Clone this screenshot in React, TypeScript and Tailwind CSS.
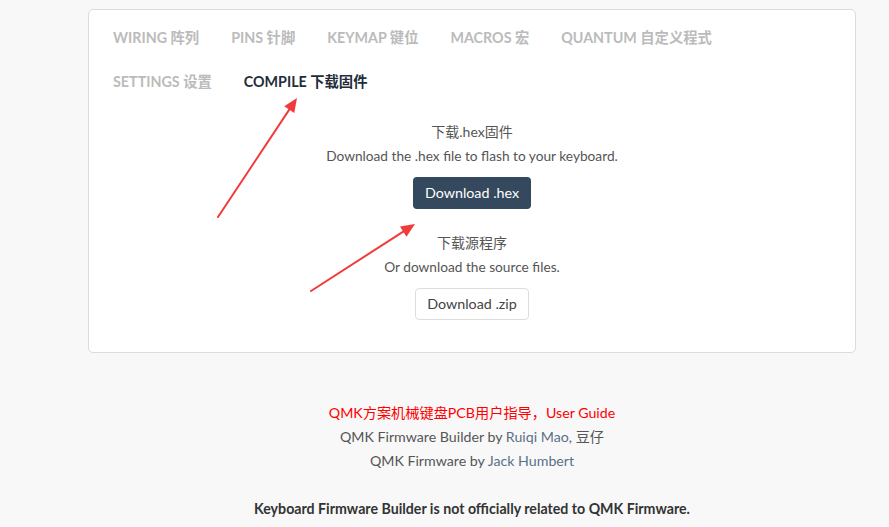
const tabs = [
    { label: "WIRING 阵列", active: false },
    { label: "PINS 针脚", active: false },
    { label: "KEYMAP 键位", active: false },
    { label: "MACROS 宏", active: false },
    { label: "QUANTUM 自定义程式", active: false },
    { label: "SETTINGS 设置", active: false },
    { label: "COMPILE 下载固件", active: true },
]

function Arrow(props: { x1: number, y1: number, x2: number, y2: number }) {
    const dx = props.x2 - props.x1
    const dy = props.y2 - props.y1
    const len = Math.sqrt(dx * dx + dy * dy)
    const ux = dx / len
    const uy = dy / len
    const bx = props.x2 - ux * 14
    const by = props.y2 - uy * 14
    const px = -uy * 6
    const py = ux * 6
    return (
        <g>
            <line x1={props.x1} y1={props.y1} x2={bx} y2={by} stroke="#f23a3a" strokeWidth="2" strokeLinecap="round" />
            <polygon points={`${props.x2},${props.y2} ${bx + px},${by + py} ${bx - px},${by - py}`} fill="#f23a3a" />
        </g>
    )
}

export default function App() {
    return (
        <div className="relative min-h-screen bg-[#f8f8f8] pt-[9px] text-[#555] font-['Lato','Noto_Sans_CJK_SC',sans-serif]">
            <div className="ml-[88px] w-[768px]">
                <div className="rounded-[5px] border border-[#dcdcdc] bg-white px-2 pt-[6px] pb-8">
                    <div className="flex flex-wrap">
                        {tabs.map(tab => (
                            <div key={tab.label} className={`flex h-11 items-center px-4 text-[14.3px] font-bold ${tab.active ? "text-[#1f2d3a]" : "text-[#bbb]"}`}>
                                {tab.label}
                            </div>
                        ))}
                    </div>
                    <div className="flex flex-col items-center">
                        <div className="mt-4 text-sm leading-6">下载.hex固件</div>
                        <div className="text-[13.7px] leading-6">Download the .hex file to flash to your keyboard.</div>
                        <button className="mt-[9px] h-8 rounded-[4px] bg-[#34495e] px-3 text-[14.3px] text-white">Download .hex</button>
                        <div className="mt-[22px] text-sm leading-6">下载源程序</div>
                        <div className="text-[13.7px] leading-6">Or download the source files.</div>
                        <button className="mt-[9px] h-8 rounded-[4px] border border-[#ddd] bg-white px-[11px] text-[14.3px] text-[#444]">Download .zip</button>
                    </div>
                </div>
                <div className="mt-12 flex flex-col items-center text-[14.2px] leading-6">
                    <div className="text-[#f00]">QMK方案机械键盘PCB用户指导，User Guide</div>
                    <div>QMK Firmware Builder by <span className="text-[#5b7088]">Ruiqi Mao</span>, 豆仔</div>
                    <div>QMK Firmware by <span className="text-[#5b7088]">Jack Humbert</span></div>
                    <div className="mt-6 font-bold text-[#333]">Keyboard Firmware Builder is not officially related to QMK Firmware.</div>
                </div>
            </div>
            <svg className="pointer-events-none absolute left-0 top-0" width="889" height="527">
                <Arrow x1={218} y1={217} x2={297} y2={98} />
                <Arrow x1={311} y1={291} x2={415} y2={224} />
            </svg>
        </div>
    )
}
